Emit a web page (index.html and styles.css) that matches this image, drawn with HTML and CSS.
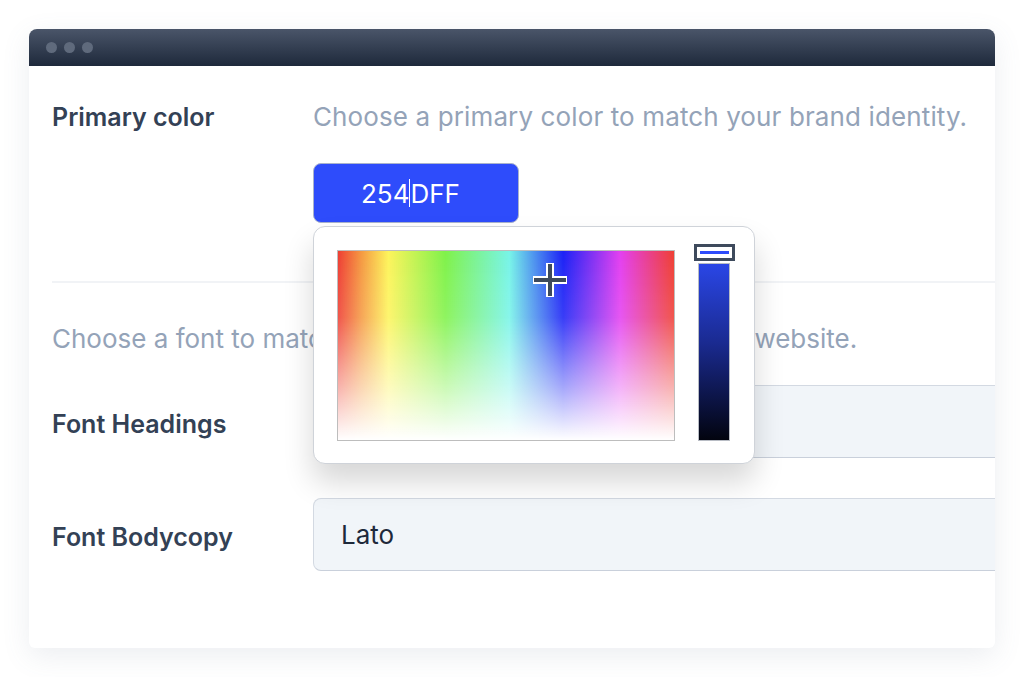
FILE: index.html
```html
<!DOCTYPE html>
<html lang="en">
<head>
    <meta charset="UTF-8">
    <meta name="viewport" content="width=device-width, initial-scale=1.0">
    <title>Brand Settings</title>
    <link rel="stylesheet" href="styles.css">
</head>
<body>
    <div class="window">
        <div class="titlebar">
            <span class="dot"></span>
            <span class="dot"></span>
            <span class="dot"></span>
        </div>

        <main class="content">
            <section class="setting">
                <div class="setting-row">
                    <h2 class="setting-label">Primary color</h2>
                    <p class="setting-hint">Choose a primary color to match your brand identity.</p>
                </div>
                <div class="setting-row">
                    <span></span>
                    <div class="color-field">
                        <div class="color-input">254<span class="caret"></span>DFF</div>

                        <!-- Color picker popup -->
                        <div class="picker">
                            <div class="picker-area">
                                <svg class="crosshair" width="40" height="40" viewBox="0 0 40 40">
                                    <path d="M20 3 V37 M3 20 H37" stroke="#fff" stroke-width="8" fill="none"/>
                                    <path d="M20 4 V36 M4 20 H36" stroke="#3e4a5c" stroke-width="4" fill="none"/>
                                </svg>
                            </div>
                            <div class="picker-hue">
                                <span class="hue-handle"></span>
                            </div>
                        </div>
                    </div>
                </div>
            </section>

            <hr class="divider">

            <section class="setting">
                <p class="setting-hint font-hint">Choose a font to match the typography and style of your website.</p>
                <div class="setting-row field-row">
                    <h2 class="setting-label">Font Headings</h2>
                    <div class="select-box">Inter</div>
                </div>
                <div class="setting-row field-row">
                    <h2 class="setting-label">Font Bodycopy</h2>
                    <div class="select-box">Lato</div>
                </div>
            </section>
        </main>
    </div>
</body>
</html>
```

FILE: styles.css
```css
* {
    margin: 0;
    padding: 0;
    box-sizing: border-box;
}

body {
    font-family: Inter, "Noto Sans", sans-serif;
    background: #fff;
    padding: 29px;
}

.window {
    width: 966px;
    height: 619px;
    border-radius: 8px 8px 6px 6px;
    background: #fff;
    overflow: hidden;
    box-shadow: 0 8px 28px rgba(100, 116, 139, 0.12);
}

.titlebar {
    height: 37px;
    display: flex;
    align-items: center;
    gap: 7px;
    padding-left: 17px;
    background: linear-gradient(to bottom, #4a5569, #1e293b);
}

.dot {
    width: 11px;
    height: 11px;
    border-radius: 50%;
    background: #5f6a7c;
}

.content {
    padding: 35px 0 0 23px;
}

.setting-row {
    display: grid;
    grid-template-columns: 261px 1fr;
}

.setting-label {
    font-size: 25px;
    line-height: 32px;
    font-weight: 600;
    color: #334155;
}

.setting-hint {
    font-size: 26px;
    line-height: 32px;
    letter-spacing: 0.12px;
    color: #94a3b8;
    white-space: nowrap;
}

.font-hint {
    letter-spacing: 0;
}

/* Color input + picker */
.color-field {
    position: relative;
    margin-top: 30px;
    width: 206px;
}

.color-input {
    height: 60px;
    display: flex;
    align-items: center;
    padding-left: 47px;
    background: #2e4cfb;
    border: 1px solid #a9b2cc;
    border-radius: 8px;
    color: #fff;
    font-size: 26px;
}

.caret {
    width: 1px;
    height: 28px;
    background: #fff;
}

.picker {
    position: absolute;
    top: calc(100% + 3px);
    left: 0;
    z-index: 10;
    width: 442px;
    height: 238px;
    display: flex;
    gap: 23px;
    padding: 23px 24px 24px 23px;
    background: #fff;
    border: 1px solid #cfd3d9;
    border-radius: 12px;
    box-shadow: 0 18px 30px rgba(0, 0, 0, 0.16);
}

.picker-area {
    position: relative;
    width: 340px;
    height: 191px;
    border: 1px solid #bdbdbd;
    background:
        linear-gradient(to bottom, rgba(255,255,255,0) 0%, rgba(255,255,255,0.12) 35%, rgba(255,255,255,0.6) 72%, #fff 100%),
        linear-gradient(to right, #ee3e33 0%, #f59a42 7%, #fdf45b 15%, #7ff24a 32%, #77f4e8 51%, #1c22f6 67%, #e33ff0 84%, #ef3f34 100%);
}

.crosshair {
    position: absolute;
    left: 192px;
    top: 9px;
}

.picker-hue {
    position: relative;
    width: 32px;
    height: 178px;
    margin-top: 13px;
    border: 1px solid #b8bcc4;
    background: linear-gradient(to bottom, #2a46e6, #1a2a90 45%, #02040f);
}

.hue-handle {
    position: absolute;
    top: -20px;
    left: -5px;
    width: 41px;
    height: 17px;
    border: 3px solid #3e4a5c;
    background: #fff;
}

.hue-handle::after {
    content: "";
    position: absolute;
    left: 3px;
    right: 3px;
    top: 4px;
    height: 3px;
    background: #2e4cfb;
}

.divider {
    border: none;
    border-top: 2px solid #f1f3f6;
    margin-top: 58px;
}

.setting + .divider + .setting .setting-hint {
    margin-top: 40px;
}

.field-row {
    align-items: center;
    margin-top: 30px;
}

.field-row + .field-row {
    margin-top: 40px;
}

.setting-row.field-row .setting-label {
    padding-top: 4px;
}

.select-box {
    height: 73px;
    margin-right: -12px;
    display: flex;
    align-items: center;
    padding-left: 27px;
    background: #f1f5f9;
    border: 1px solid #d3d9e2;
    border-bottom-color: #c9d0db;
    border-radius: 8px;
    font-size: 26px;
    color: #1e293b;
}
```
